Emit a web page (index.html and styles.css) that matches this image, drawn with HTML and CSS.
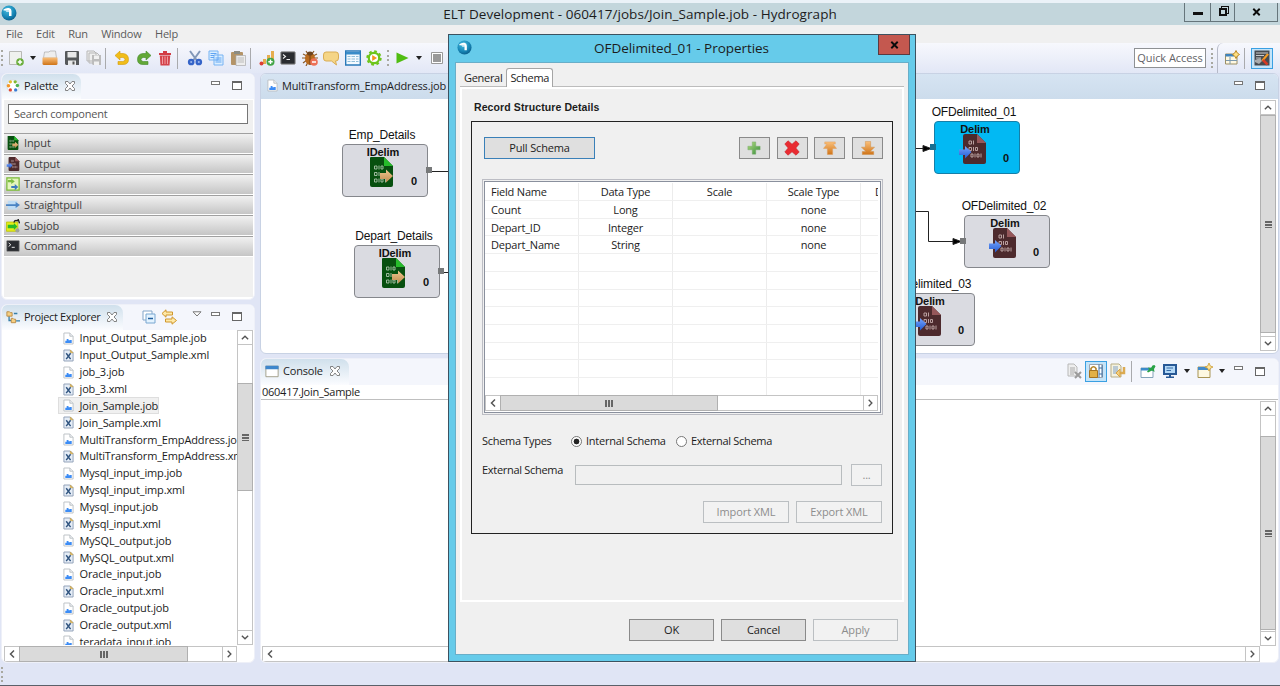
FILE: index.html
```html
<!DOCTYPE html>
<html lang="en">
<head>
<meta charset="utf-8">
<title>ELT Development - Hydrograph</title>
<link rel="stylesheet" href="styles.css">
</head>
<body>
<svg class="sprite" aria-hidden="true">
  <defs>
    <radialGradient id="ball" cx=".4" cy=".3" r=".8"><stop offset="0" stop-color="#46bde0"/><stop offset=".6" stop-color="#1685b5"/><stop offset="1" stop-color="#07537f"/></radialGradient>
    <linearGradient id="orange" x1="0" y1="0" x2="0" y2="1"><stop offset="0" stop-color="#fbc07a"/><stop offset="1" stop-color="#cf7418"/></linearGradient>
    <linearGradient id="green" x1="0" y1="0" x2="1" y2="1"><stop offset="0" stop-color="#b4dc80"/><stop offset="1" stop-color="#358d3c"/></linearGradient>
    <linearGradient id="blue" x1="0" y1="0" x2="0" y2="1"><stop offset="0" stop-color="#75a5ff"/><stop offset="1" stop-color="#245bd0"/></linearGradient>
    <linearGradient id="tan" x1="0" y1="0" x2="0" y2="1"><stop offset="0" stop-color="#f0c890"/><stop offset="1" stop-color="#c08a4c"/></linearGradient>
  </defs>
  <symbol id="logo" viewBox="0 0 16 16"><circle cx="8" cy="8" r="7.500" fill="url(#ball)"/><path d="M2.500 4.500Q5 2.500 8 3Q10.500 3.500 10.500 6V11H8V7H5.500V5.500H2.500z" fill="#fff"/><path d="M4 5H8V7H6z" fill="#bfe6f4"/></symbol>
  <symbol id="new" viewBox="0 0 16 16"><path d="M1.500 1.500H13.500V14.500H1.500z" fill="#eff1ee" stroke="#b8b9b5"/><circle cx="12" cy="12" r="3.800" fill="#68ad38"/><path d="M12 9.800V14.200M9.800 12H14.200" stroke="#fff" stroke-width="1.500"/></symbol>
  <symbol id="open" viewBox="0 0 16 16"><path d="M1.500 8L2.500 2H7L8 1H13.500L14.500 8z" fill="#eee" stroke="#aaa" stroke-width=".7"/><path d="M.5 7.500H15.500V13.500Q15.500 15 14 15H2Q.5 15 .5 13.500z" fill="url(#orange)"/></symbol>
  <symbol id="save" viewBox="0 0 16 16"><path d="M1 2Q1 1 2 1H14Q15 1 15 2V15H2L1 14z" fill="#55585b"/><path d="M3.500 2H12.500V7.500H3.500zM4 10.500H12V15H4z" fill="#e8e9ea"/><path d="M8.500 11.500H10.500V14.500H8.500z" fill="#555"/></symbol>
  <symbol id="saveall" viewBox="0 0 16 16"><path d="M1 1H8L10 3V11H1zM3 3H11L13 5V13H3z" fill="#eee" stroke="#b7b7b7"/><path d="M6 5H15V15H7L6 14z" fill="#bcbcbc"/><path d="M8 5.500H13V9H8zM8 11.500H13V15H8z" fill="#f1f1f1"/></symbol>
  <symbol id="undo" viewBox="0 0 16 16"><path d="M1 5.500L6 1V3.500H9Q14.500 4 14.500 9.500Q14.500 14.500 9 14.500H4V11.500H8.500Q11 11.500 11 9.500Q11 7.500 8.500 7.500H6V10z" fill="#f1bd19" stroke="#d29a0c" stroke-width=".6"/></symbol>
  <symbol id="redo" viewBox="0 0 16 16"><path d="M15 5.500L10 1V3.500H7Q1.500 4 1.500 9.500Q1.500 14.500 7 14.500H12V11.500H7.500Q5 11.500 5 9.500Q5 7.500 7.500 7.500H10V10z" fill="#62a837" stroke="#438a29" stroke-width=".6"/></symbol>
  <symbol id="trash" viewBox="0 0 16 16"><path d="M2 3H6V1H10V3H14V5H2z" fill="#d23b44"/><path d="M2.800 5.500H13.200L12.500 15.500H3.500z" fill="#d4434b"/><path d="M5.500 6.500V14M8 6.500V14M10.500 6.500V14" stroke="#f09ba0"/></symbol>
  <symbol id="cut" viewBox="0 0 16 16"><path d="M3 1L9.500 10M13 1L6.500 10" stroke="#8297b8" stroke-width="2"/><g fill="#9db8ee" stroke="#3564c8" stroke-width="2.300"><circle cx="4.200" cy="12" r="2.200"/><circle cx="11.800" cy="12" r="2.200"/></g></symbol>
  <symbol id="copy" viewBox="0 0 16 16"><path d="M1 1H10V10H1zM6 5H15V15H6z" fill="#dbeeff" stroke="#76b3f3"/><path d="M2.500 3.500H8.500M2.500 5.500H6M2.500 7.500H6M7.500 8H13.500M7.500 10H13.500M7.500 12H13.500" stroke="#60a5f3"/></symbol>
  <symbol id="paste" viewBox="0 0 16 16"><rect x="1" y="2" width="12" height="13" rx="1" fill="#b49468"/><path d="M4 1H10V4H4z" fill="#8c8c83"/><path d="M6 5.500H15.500V15.500H6z" fill="#ededed" stroke="#aaa" stroke-width=".7"/><path d="M7.500 8H14M7.500 10H14M7.500 12H14" stroke="#bbb"/></symbol>
  <symbol id="chart" viewBox="0 0 16 16"><path d="M4 9H7V14H4zM8 5H11V14H8zM12 1H15V14H12z" fill="#e6ad4f"/><circle cx="2.500" cy="13.500" r="2" fill="#dc3e37"/><circle cx="11.500" cy="11.700" r="4" fill="#43a548"/><path d="M11.500 9.500V14M9.300 11.700H13.700" stroke="#fff" stroke-width="1.400"/></symbol>
  <symbol id="terminal" viewBox="0 0 16 16"><rect x=".8" y="1.800" width="14.400" height="12.400" rx=".8" fill="#2a2c30" stroke="#9b9b9b"/><path d="M3 4.500L5.500 6.500L3 8.500M6.500 9.500H10" fill="none" stroke="#eee" stroke-width="1.100"/></symbol>
  <symbol id="bug" viewBox="0 0 16 16"><path d="M4 1L6 4M12 1L10 4M1 4L5 6M15 4L11 6M0 8H16M1 13L5 10M4 16L6 12" stroke="#8b5a29" stroke-width="1.200"/><ellipse cx="8" cy="8.500" rx="5" ry="6.300" fill="#b96a1e"/><ellipse cx="8" cy="3.500" rx="3" ry="2" fill="#6c431e"/><path d="M8 5V15" stroke="#754015"/><circle cx="12" cy="12" r="3.800" fill="#ed7057"/><path d="M10 12H14" stroke="#fff" stroke-width="1.500"/></symbol>
  <symbol id="bubble" viewBox="0 0 16 16"><path d="M3 2H13Q15.500 2 15.500 5V8Q15.500 11 13 11H12.500L13.500 15L8.500 11H3Q.5 11 .5 8V5Q.5 2 3 2z" fill="#f5d587" stroke="#d9ad56"/></symbol>
  <symbol id="grid" viewBox="0 0 16 16"><path d="M.7 1H15.300V15H.7z" fill="#f4faff" stroke="#2979b9" stroke-width="1.400"/><path d="M1 2H15V4.500H1z" fill="#398cc9"/><path d="M2.500 6.500H13.500M2.500 9H13.500M2.500 11.500H13.500" stroke="#91bed9"/><path d="M6 5V14M10.500 5V14" stroke="#f4faff"/></symbol>
  <symbol id="gear" viewBox="0 0 16 16"><circle cx="8" cy="8" r="5.200" fill="#fff" stroke="#6ec51b" stroke-width="2.200"/><circle cx="8" cy="8" r="6.700" fill="none" stroke="#6ec51b" stroke-width="2" stroke-dasharray="2.700 2.560"/><path d="M6.200 5L11 8L6.200 11z" fill="#f3951c"/></symbol>
  <symbol id="play" viewBox="0 0 16 16"><path d="M2.500 2.500L14.500 8L2.500 13.500z" fill="#50bd12"/></symbol>
  <symbol id="stop" viewBox="0 0 16 16"><path d="M2.500 2.500H13.500V13.500H2.500z" fill="#fff" stroke="#999"/><path d="M4 4H12V12H4z" fill="#999"/></symbol>
  <symbol id="palette" viewBox="0 0 16 16"><circle cx="8" cy="8" r="7" fill="#fff" stroke="#d6dbe3"/><circle cx="5" cy="3.200" r="1.900" fill="#e5bd2d"/><circle cx="10.500" cy="3.200" r="1.900" fill="#83b934"/><circle cx="13" cy="7.500" r="2" fill="#4fb254"/><circle cx="2.800" cy="7.800" r="2" fill="#f39728"/><circle cx="5" cy="12.500" r="1.900" fill="#e24932"/><circle cx="11" cy="12.500" r="1.900" fill="#387bd5"/></symbol>
  <symbol id="close" viewBox="0 0 12 12"><path d="M1.500 1.500H4L6 4L8 1.500H10.500V3.500L8 6L10.500 8.500V10.500H8L6 8L4 10.500H1.500V8.500L4 6L1.500 3.500z" fill="#fdfdfd" stroke="#777" stroke-width=".9"/></symbol>
  <symbol id="tree" viewBox="0 0 16 16"><path d="M3.500 6V12H6M9 4H13M11.500 12.500H16" fill="none" stroke="#367ea8" stroke-width="1.500"/><path d="M1 2H4L5 3H7V7H1zM6 9.500H8L9 10.500H11V14.500H6z" fill="#f5cf83" stroke="#b88841"/></symbol>
  <symbol id="collapse" viewBox="0 0 16 16"><path d="M2 2H11V11H2z" fill="#fff" stroke="#83a6c9"/><path d="M5 5H14V14H5z" fill="#e3f3ff" stroke="#79a6d0"/><path d="M7 9.500H12" stroke="#225f9e" stroke-width="1.500"/></symbol>
  <symbol id="link" viewBox="0 0 16 16"><path d="M5 .8V3H11.500V6H5V8.200L1 4.500zM11 7.800V10H4.500V13H11V15.200L15.500 11.500z" fill="#ffe9a6" stroke="#cf962d"/></symbol>
  <symbol id="job" viewBox="0 0 12 14"><path d="M1 1H7.500L11 4.500V13H1z" fill="#fff" stroke="#b9bec3"/><path d="M7.500 1V4.500H11" fill="#eef1f4" stroke="#b9bec3"/><path d="M2.500 12V9.500H4V7.500H6V9H7.500V8.500H9.500V12z" fill="#3c8cf5"/></symbol>
  <symbol id="xml" viewBox="0 0 12 14"><path d="M1 1H8L11 4V13H1z" fill="#e5edf7" stroke="#8c9db3"/><path d="M8 1L11 4H8z" fill="#e6be59" stroke="#c6a14e" stroke-width=".7"/><path d="M3.500 4.500L8.300 11M8.300 4.500L3.500 11" stroke="#315580" stroke-width="1.600"/></symbol>
  <symbol id="inputfile" viewBox="0 0 23 30"><path d="M1 0H14L23 9V28Q23 30 21 30H2Q0 30 0 28V1Q0 0 1 0z" fill="#07500f"/><path d="M14 0L23 9H14z" fill="#26bb2b"/><g fill="none" stroke="#aec5ad" stroke-width=".9"><path d="M4.500 9H7V12H4.500zM9 8.500V12.500M11 9H13V12H11zM4.500 15.500H7V18.500H4.500zM9 15V19M4.500 22H7V25H4.500zM9 21.500V25.500M11 22H13V25H11zM15.500 21.500V25.500"/></g><path d="M10 16H16V12.500L23 19L16 25.500V22H10z" fill="url(#tan)"/></symbol>
  <symbol id="outputfile" viewBox="0 0 27 30"><path d="M6 0H18L27 9V28Q27 30 25 30H6Q4 30 4 28V2Q4 0 6 0z" fill="#4d2a2d"/><path d="M18 0L27 9H18z" fill="#96575a"/><g fill="none" stroke="#c5adad" stroke-width=".9"><path d="M10 7H12.500V10H10zM14.500 6.500V10.500M10 13.500H12.500V16.500H10zM14.500 13V17M16.500 13.500H18.500V16.500H16.500zM12 20H14V23H12zM16 19.500V23.500M18 20H20V23H18zM22 19.500V23.500"/></g><path d="M0 15.500H6V12L12.500 18L6 24.500V21H0z" fill="url(#blue)"/></symbol>
  <symbol id="transform" viewBox="0 0 16 16"><path d="M1 1H15V15H1z" fill="#e3f5bd" stroke="#79b934" stroke-width="1.400"/><path d="M2 3.500H6V1.800L10 5L6 8V6H2z" fill="#7cbd42"/><path d="M6 10.200H10V8L14 11.500L10 15V12.500H6z" fill="#3c79bf"/></symbol>
  <symbol id="straight" viewBox="0 0 16 16"><path d="M2 3H13V13H2z" fill="#bfdcf4"/><path d="M0 7H11V4.500L16 8L11 11.500V9H0z" fill="#4a83c3"/></symbol>
  <symbol id="subjob" viewBox="0 0 16 16"><path d="M.5 3.500H13.500V14H.5z" fill="#e4ec18" stroke="#bdc60b"/><path d="M2 6.500H9V4.500L13 8.500L9 12.500V10.500H2z" fill="#28bb2a"/><path d="M9 4Q10 1 13 2L14 .5L15.500 5" fill="none" stroke="#222" stroke-width="1.500"/><circle cx="13" cy="13" r="2.400" fill="#9fa39b"/></symbol>
  <symbol id="console" viewBox="0 0 16 16"><path d="M1 2.500H15V14.500H1z" fill="#fff" stroke="#9c9880"/><path d="M.5 2H15.500V6H.5z" fill="#3e87cc"/></symbol>
  <symbol id="clear" viewBox="0 0 16 16"><path d="M2 1H8L11 4V13H2z" fill="#eee" stroke="#b8b8b8"/><path d="M4 5H9M4 7H9M4 9H9M4 11H8" stroke="#aaa"/><path d="M9 9L15 15M15 9L9 15" stroke="#9b9b9b" stroke-width="2"/></symbol>
  <symbol id="lock" viewBox="0 0 16 16"><path d="M1.500 1.500H14.500V14.500H1.500z" fill="#fff" stroke="#9ba5b2"/><path d="M11 1.500V14.500M11 5H14M11 11H14M14 2V14" stroke="#3c6fa2"/><path d="M3 8V5.500Q5.500 2 8 5.500V8" fill="none" stroke="#b4852b" stroke-width="1.600"/><path d="M1.500 7.500H9.500V14.500H1.500z" fill="#e2b046" stroke="#a57321"/></symbol>
  <symbol id="wrap" viewBox="0 0 16 16"><path d="M1 1H9L11 3V14H1z" fill="#f5f2df" stroke="#b7ad85"/><path d="M3 4H8M3 6H8M3 8H8M3 10H6" stroke="#7e9fc6"/><path d="M14 4V10H9" fill="none" stroke="#dbaa51" stroke-width="2.500"/><path d="M10 6V14L6 10z" fill="#f5cf7c" stroke="#d5a247"/></symbol>
  <symbol id="pin" viewBox="0 0 16 16"><path d="M1 5H13V14.500H1z" fill="#fff" stroke="#83a3b9"/><path d="M1 5H13V7.500H1z" fill="#3b8bca"/><path d="M7 8.500L9 6.500L8 4.500L11 5L12.500 2.500Q15 1 15.500 3.500L14 6L14.500 9L12 7.500L8 9.500z" fill="#29a347"/></symbol>
  <symbol id="monitor" viewBox="0 0 16 16"><path d="M2 2H14V11H2z" fill="#b4d9f7" stroke="#285996" stroke-width="2"/><path d="M4.500 5H11M4.500 7.500H9" stroke="#386da7"/><path d="M7 12H9V13.500H12V15H4V13.500H7z" fill="#285996"/></symbol>
  <symbol id="newwin" viewBox="0 0 16 16"><path d="M1 4H13V14.500H1z" fill="#fdf8e1" stroke="#a89454"/><path d="M1 4H11V7H1z" fill="#438aca"/><path d="M12 0L13.300 3L16 4L13.300 5.300L12 8L10.700 5.300L8 4L10.700 3z" fill="#ffe59a" stroke="#c99b32" stroke-width=".8"/></symbol>
  <symbol id="perspective" viewBox="0 0 16 16"><path d="M1.500 4H13V14H1.500z" fill="#fff8e1" stroke="#9a8e65"/><path d="M1.500 4H10V6.500H1.500z" fill="#3d83bf"/><path d="M6 7V14M2 10.500H13" stroke="#7b98ad"/><path d="M12 .5L13.300 3L15.500 4.500L13.300 6L12 8.500L10.700 6L8.500 4.500L10.700 3z" fill="#ffe083" stroke="#bc8b28"/></symbol>
  <symbol id="elt" viewBox="0 0 16 16"><path d="M.5 .5H15.500V15.500H.5z" fill="#474b50"/><path d="M2 3H14M2 5.500H10M2 8H7" stroke="#c9c9c9"/><path d="M1 10L6 8L8 11L5 14L1 12z" fill="#a9abad"/><path d="M7.500 10L9 11.500L15 4.500L13 3.500z" fill="#f49a21"/><path d="M9 10L13.500 14.500" stroke="#d63a24" stroke-width="2.500"/></symbol>
  <symbol id="plus" viewBox="0 0 16 16"><path d="M6 1H10V6H15V10H10V15H6V10H1V6H6z" fill="url(#green)" stroke="#75a96a" stroke-width=".5"/></symbol>
  <symbol id="cross" viewBox="0 0 16 16"><path d="M4 .8L8 4.200L12 .8L15.200 4L11.800 8L15.200 12L12 15.200L8 11.800L4 15.200L.8 12L4.200 8L.8 4z" fill="#e92b31" stroke="#c71f26" stroke-width=".6"/></symbol>
  <symbol id="top" viewBox="0 0 16 16"><path d="M2 1H14V3.500H11.500L15.500 8.500H11V15.500H5V8.500H.5L4.500 3.500H2z" fill="url(#orange)" stroke="#dc9b58" stroke-width=".5"/></symbol>
  <symbol id="bottom" viewBox="0 0 16 16"><path d="M5 .5H11V7H15.500L10.500 12H14.500V15.500H1.500V12H5.500L.5 7H5z" fill="url(#orange)" stroke="#cc8a40" stroke-width=".5"/></symbol>
  <symbol id="up" viewBox="0 0 10 10"><path d="M1.500 7L5 3.500L8.500 7" fill="none" stroke="#555" stroke-width="1.500"/></symbol>
  <symbol id="down" viewBox="0 0 10 10"><path d="M1.500 3L5 6.500L8.500 3" fill="none" stroke="#555" stroke-width="1.500"/></symbol>
  <symbol id="left" viewBox="0 0 10 10"><path d="M7 1.500L3.500 5L7 8.500" fill="none" stroke="#555" stroke-width="1.500"/></symbol>
  <symbol id="right" viewBox="0 0 10 10"><path d="M3 1.500L6.500 5L3 8.500" fill="none" stroke="#555" stroke-width="1.500"/></symbol>
</svg>

<header class="titlebar">
  <svg class="ico"><use href="#logo"/></svg>
  <h1 class="window-title">ELT Development - 060417/jobs/Join_Sample.job - Hydrograph</h1>
  <div class="window-buttons"><span class="wb"><i class="wb-min"></i></span><span class="wb wb-mid"><i class="wb-restore"></i></span><span class="wb wb-wide"><svg class="wb-x" viewBox="0 0 10 10"><path d="M1 1L9 9M9 1L1 9"/></svg></span></div>
</header>
<nav class="menubar"><span>File</span><span>Edit</span><span>Run</span><span>Window</span><span>Help</span></nav>
<div class="toolbar">
  <i class="dots"></i>
  <div class="tools g1"><svg class="ico"><use href="#new"/></svg><i class="caret"></i><svg class="ico"><use href="#open"/></svg><svg class="ico"><use href="#save"/></svg><svg class="ico"><use href="#saveall"/></svg></div>
  <i class="sep"></i>
  <div class="tools g2"><svg class="ico"><use href="#undo"/></svg><svg class="ico"><use href="#redo"/></svg><svg class="ico"><use href="#trash"/></svg></div>
  <i class="sep"></i>
  <div class="tools g2"><svg class="ico"><use href="#cut"/></svg><svg class="ico"><use href="#copy"/></svg><svg class="ico"><use href="#paste"/></svg></div>
  <i class="sep"></i>
  <div class="tools g2"><svg class="ico"><use href="#chart"/></svg><svg class="ico"><use href="#terminal"/></svg><svg class="ico"><use href="#bug"/></svg><svg class="ico"><use href="#bubble"/></svg><svg class="ico"><use href="#grid"/></svg><svg class="ico"><use href="#gear"/></svg></div>
  <i class="dots"></i>
  <div class="tools g3"><svg class="ico"><use href="#play"/></svg><i class="caret"></i><svg class="ico"><use href="#stop"/></svg></div>
  <div class="quick">Quick Access</div>
  <i class="dots quick-dots"></i>
  <div class="perspectives"><svg class="ico"><use href="#perspective"/></svg><i class="sep"></i><span class="active-tool"><svg class="ico"><use href="#elt"/></svg></span></div>
</div>

<main class="workbench">
  <div class="side">
    <section class="view palette">
      <div class="tabs"><div class="tab"><svg class="ico s14"><use href="#palette"/></svg><span>Palette</span><svg class="x"><use href="#close"/></svg></div><div class="view-tools"><i class="min"></i><i class="max"></i></div></div>
      <div class="palette-body">
        <div class="search">Search component</div>
        <div class="drawers">
          <div class="drawer"><svg class="ico s14"><use href="#inputfile"/></svg>Input</div>
          <div class="drawer"><svg class="ico s14"><use href="#outputfile"/></svg>Output</div>
          <div class="drawer"><svg class="ico s14"><use href="#transform"/></svg>Transform</div>
          <div class="drawer"><svg class="ico s14"><use href="#straight"/></svg>Straightpull</div>
          <div class="drawer"><svg class="ico s14"><use href="#subjob"/></svg>Subjob</div>
          <div class="drawer"><svg class="ico s14"><use href="#terminal"/></svg>Command</div>
        </div>
      </div>
    </section>
    <section class="view explorer">
      <div class="tabs"><div class="tab"><svg class="ico s14"><use href="#tree"/></svg><span>Project Explorer</span><svg class="x"><use href="#close"/></svg></div><div class="view-tools"><svg class="ico collapse"><use href="#collapse"/></svg><svg class="ico link"><use href="#link"/></svg><svg class="menu-tri" viewBox="0 0 10 6"><path d="M1 .8H9L5 5z"/></svg><i class="min"></i><i class="max"></i></div></div>
      <div class="explorer-body">
        <div class="tree-row">
          <div class="files">
            <div class="file"><svg class="fi"><use href="#job"/></svg><span>Input_Output_Sample.job</span></div>
            <div class="file"><svg class="fi"><use href="#xml"/></svg><span>Input_Output_Sample.xml</span></div>
            <div class="file"><svg class="fi"><use href="#job"/></svg><span>job_3.job</span></div>
            <div class="file"><svg class="fi"><use href="#xml"/></svg><span>job_3.xml</span></div>
            <div class="file selected"><svg class="fi"><use href="#job"/></svg><span>Join_Sample.job</span></div>
            <div class="file"><svg class="fi"><use href="#xml"/></svg><span>Join_Sample.xml</span></div>
            <div class="file"><svg class="fi"><use href="#job"/></svg><span>MultiTransform_EmpAddress.job</span></div>
            <div class="file"><svg class="fi"><use href="#xml"/></svg><span>MultiTransform_EmpAddress.xml</span></div>
            <div class="file"><svg class="fi"><use href="#job"/></svg><span>Mysql_input_imp.job</span></div>
            <div class="file"><svg class="fi"><use href="#xml"/></svg><span>Mysql_input_imp.xml</span></div>
            <div class="file"><svg class="fi"><use href="#job"/></svg><span>Mysql_input.job</span></div>
            <div class="file"><svg class="fi"><use href="#xml"/></svg><span>Mysql_input.xml</span></div>
            <div class="file"><svg class="fi"><use href="#job"/></svg><span>MySQL_output.job</span></div>
            <div class="file"><svg class="fi"><use href="#xml"/></svg><span>MySQL_output.xml</span></div>
            <div class="file"><svg class="fi"><use href="#job"/></svg><span>Oracle_input.job</span></div>
            <div class="file"><svg class="fi"><use href="#xml"/></svg><span>Oracle_input.xml</span></div>
            <div class="file"><svg class="fi"><use href="#job"/></svg><span>Oracle_output.job</span></div>
            <div class="file"><svg class="fi"><use href="#xml"/></svg><span>Oracle_output.xml</span></div>
            <div class="file"><svg class="fi"><use href="#job"/></svg><span>teradata_input.job</span></div>
          </div>
          <div class="vbar"><svg class="arrow"><use href="#up"/></svg><div class="vthumb ex-v"><i class="vgrip"></i></div><svg class="arrow last"><use href="#down"/></svg></div>
        </div>
        <div class="hbar"><svg class="arrow"><use href="#left"/></svg><div class="hthumb ex-h"><i class="hgrip"></i></div><svg class="arrow last"><use href="#right"/></svg></div>
      </div>
    </section>
  </div>

  <div class="center">
    <section class="view editor">
      <div class="tabs"><div class="editor-tab"><svg class="fi"><use href="#job"/></svg><span>MultiTransform_EmpAddress.job</span></div><div class="view-tools"><i class="min"></i><i class="max"></i></div></div>
      <div class="editor-body">
        <div class="canvas">
          <svg class="wires" viewBox="0 0 1000 255"><path d="M171 72.500H200M183 173.500H200M650 49.500H670M650 112.500H667.500V142.500H700" /><path class="head" d="M662 46.500L670 49.500L662 52.500zM692 139.500L700 142.500L692 145.500z"/></svg>
          <div class="node emp"><b class="label">Emp_Details</b><span class="kind">IDelim</span><svg class="in"><use href="#inputfile"/></svg><span class="num">0</span><i class="port r"></i></div>
          <div class="node dep"><b class="label">Depart_Details</b><span class="kind">IDelim</span><svg class="in"><use href="#inputfile"/></svg><span class="num">0</span><i class="port r"></i></div>
          <div class="node of1"><b class="label">OFDelimited_01</b><span class="kind">Delim</span><svg class="out"><use href="#outputfile"/></svg><span class="num">0</span><i class="port l"></i></div>
          <div class="node of2"><b class="label">OFDelimited_02</b><span class="kind">Delim</span><svg class="out"><use href="#outputfile"/></svg><span class="num">0</span><i class="port l"></i></div>
          <div class="node of3"><b class="label">OFDelimited_03</b><span class="kind">Delim</span><svg class="out"><use href="#outputfile"/></svg><span class="num">0</span></div>
        </div>
        <div class="vbar"><svg class="arrow"><use href="#up"/></svg><div class="vthumb ed-v"><i class="vgrip"></i></div><svg class="arrow last"><use href="#down"/></svg></div>
      </div>
    </section>
    <section class="view console">
      <div class="tabs"><div class="tab"><svg class="ico s14"><use href="#console"/></svg><span>Console</span><svg class="x"><use href="#close"/></svg></div>
        <div class="view-tools"><svg class="ico"><use href="#clear"/></svg><span class="active-tool"><svg class="ico"><use href="#lock"/></svg></span><svg class="ico wrapico"><use href="#wrap"/></svg><i class="sep"></i><svg class="ico pinico"><use href="#pin"/></svg><svg class="ico monico"><use href="#monitor"/></svg><i class="caret"></i><svg class="ico winico"><use href="#newwin"/></svg><i class="caret"></i><i class="min"></i><i class="max"></i></div></div>
      <div class="console-name">060417.Join_Sample</div>
      <div class="console-body"><div class="console-text"></div><div class="vbar"><svg class="arrow"><use href="#up"/></svg><div class="vthumb co-v"><i class="vgrip"></i></div><svg class="arrow last"><use href="#down"/></svg></div></div>
      <div class="hbar"><svg class="arrow"><use href="#left"/></svg><svg class="arrow last"><use href="#right"/></svg></div>
    </section>
  </div>
</main>
<footer class="status"><i class="dots"></i></footer>

<div class="dialog">
  <div class="dlg-title"><svg class="ico"><use href="#logo"/></svg><h2 class="dlg-name">OFDelimited_01 - Properties</h2><span class="dlg-close"><svg class="wb-x" viewBox="0 0 10 10"><path d="M1 1L9 9M9 1L1 9"/></svg></span></div>
  <div class="dlg-body">
    <div class="dlg-tabs"><span class="dtab">General</span><span class="dtab on">Schema</span></div>
    <div class="pane">
      <h3 class="group-name">Record Structure Details</h3>
      <div class="group">
        <div class="actions"><span class="btn pull">Pull Schema</span><span class="btn sq"><svg class="bi"><use href="#plus"/></svg></span><span class="btn sq"><svg class="bi big"><use href="#cross"/></svg></span><span class="btn sq"><svg class="bi"><use href="#top"/></svg></span><span class="btn sq"><svg class="bi"><use href="#bottom"/></svg></span></div>
        <div class="table-frame"><div class="table-box">
          <div class="grid">
            <div class="gr gh"><span>Field Name</span><span>Data Type</span><span>Scale</span><span>Scale Type</span><span class="cut">D</span></div>
            <div class="gr"><span>Count</span><span>Long</span><span></span><span>none</span><span></span></div>
            <div class="gr"><span>Depart_ID</span><span>Integer</span><span></span><span>none</span><span></span></div>
            <div class="gr"><span>Depart_Name</span><span>String</span><span></span><span>none</span><span></span></div>
            <div class="gr"><span></span><span></span><span></span><span></span><span></span></div>
            <div class="gr"><span></span><span></span><span></span><span></span><span></span></div>
            <div class="gr"><span></span><span></span><span></span><span></span><span></span></div>
            <div class="gr"><span></span><span></span><span></span><span></span><span></span></div>
            <div class="gr"><span></span><span></span><span></span><span></span><span></span></div>
            <div class="gr"><span></span><span></span><span></span><span></span><span></span></div>
            <div class="gr"><span></span><span></span><span></span><span></span><span></span></div>
            <div class="gr"><span></span><span></span><span></span><span></span><span></span></div>
          </div>
          <div class="hbar"><svg class="arrow"><use href="#left"/></svg><div class="hthumb dl-h"><i class="hgrip"></i></div><svg class="arrow last"><use href="#right"/></svg></div>
        </div></div>
        <div class="types"><span class="lbl">Schema Types</span><i class="radio on"></i><span class="rl">Internal Schema</span><i class="radio"></i><span>External Schema</span></div>
        <div class="ext"><span class="lbl ext-lbl">External Schema</span><span class="field"></span><span class="btn off dotsbtn">...</span></div>
        <div class="xmls"><span class="btn off xbtn">Import XML</span><span class="btn off xbtn">Export XML</span></div>
      </div>
    </div>
    <div class="dlg-foot"><span class="btn ok">OK</span><span class="btn ok">Cancel</span><span class="btn ok off">Apply</span></div>
  </div>
</div>
</body>
</html>
```
FILE: styles.css
```css
* { box-sizing: border-box; }
body {
  margin: 0; width: 1280px; height: 686px; overflow: hidden; position: relative;
  display: flex; flex-direction: column;
  background: #e0e5f5; color: #1c1c1c;
  font: 11px/16px "Open Sans", "Noto Sans", sans-serif; letter-spacing: -.2px;
}
h1, h2, h3 { margin: 0; font-weight: 400; }
i { display: block; flex: none; }
svg { flex: none; display: block; }
.sprite { position: absolute; width: 0; height: 0; }
.ico { width: 16px; height: 16px; }
.s14 { width: 14px; height: 14px; }

.titlebar { height: 25px; border-top: 3px solid #ebf2f8; background: #c3d6dc; display: flex; flex: none; padding-left: 1px; }
.titlebar .ico { margin-top: 2px; }
.window-title { flex: 1; text-align: center; font-size: 13.500px; line-height: 22px; padding-left: 79px; letter-spacing: .06px; }
.window-buttons { display: flex; height: 19px; margin-right: 2px; border: 1px solid #66757b; border-top: 0; }
.wb { width: 26px; display: flex; justify-content: center; align-items: center; border-right: 1px solid #66757b; }
.wb-mid { width: 24px; }
.wb-wide { width: 42px; border: 0; }
.wb-min { width: 10px; height: 3px; background: #111; margin-top: 3px; }
.wb-restore { width: 8px; height: 8px; border: 2px solid #111; box-shadow: 2px -2px 0 -1px #c3d6dc, 2px -2px 0 0 #111; }
.wb-x { width: 9px; height: 8px; fill: none; stroke: #0b0b0b; stroke-width: 2.4; }

.menubar { height: 18px; flex: none; background: #f0f0f0; display: flex; gap: 13.400px; padding-left: 6px; line-height: 18px; color: #5b5b5b; }
.toolbar { height: 30px; flex: none; display: flex; align-items: center; padding-left: 1px; background: linear-gradient(#f7f8fd, #e2e7f6); }
.tools { display: flex; align-items: center; gap: 5.5px; }
.dots { width: 2px; height: 17px; background: repeating-linear-gradient(#a8a8a0 0 2px, transparent 2px 4.5px); }
.sep { width: 1px; height: 21px; background: #a9aaad; }
.caret { border: 3.5px solid transparent; border-top: 4px solid #222; border-bottom: 0; }
.g1 { padding: 0 3px 0 5px; gap: 6px; }
.g2 { padding: 0 4.200px 0 8.200px; }
.g3 { padding-left: 5px; gap: 6.500px; }
.quick { margin-left: auto; width: 72px; height: 20px; border: 1px solid #8e9194; background: #fff; line-height: 18px; text-align: center; color: #5f6266; white-space: nowrap; letter-spacing: -.05px; }
.quick-dots { height: 21px; margin: 0 4px 0 5px; }
.perspectives { display: flex; align-items: center; height: 30px; gap: 4px; padding: 0 7px 0 6px; border-left: 1px solid #b6bac8; border-top-left-radius: 6px; }
.active-tool { width: 22px; height: 21px; border: 1px solid #3aa0e2; background: #c4e4f9; display: flex; align-items: center; justify-content: center; }
.perspectives .active-tool { margin-left: 2px; }

.workbench { height: 590px; flex: none; display: flex; gap: 5px; padding: 0 1px; }
.side { width: 254px; display: flex; flex-direction: column; gap: 4px; }
.center { flex: 1; min-width: 0; display: flex; flex-direction: column; gap: 4px; }
.view { background: #fff; border-radius: 6px; overflow: hidden; display: flex; flex-direction: column; border: 1px solid #eef0f8; }
.tabs { height: 25px; flex: none; display: flex; background: #f4f6fc; }
.tab { display: flex; align-items: center; padding: 0 5px 2px 4px; border-radius: 5px 8px 0 0; background: linear-gradient(#d0e0ec, #fbfcff); white-space: nowrap; }
.tab span { margin-left: 4px; }
.explorer .tab span { letter-spacing: -.34px; }
.x { width: 12px; height: 12px; margin-left: 6px; }
.view-tools { margin-left: auto; display: flex; align-items: center; padding-bottom: 2px; }
.min { width: 9px; height: 4px; border: 1px solid #777; background: #fff; margin: -6px 12px 0 0; }
.max { width: 10px; height: 9px; border: 1px solid #666; border-top-width: 2px; background: #fff; margin-right: 12px; }
.center .max { margin-right: 13px; }

.palette { height: 227px; }
.palette-body { flex: 1; margin: 1px 1px 2px 2px; background: #f0f0f0; padding: 4px 0 0; }
.search { width: 240px; height: 20px; margin-left: 4px; border: 1px solid #767676; background: #fff; line-height: 18px; padding-left: 5px; color: #555; letter-spacing: -.2px; }
.drawers { margin-top: 9px; }
.drawer { height: 20.600px; display: flex; align-items: center; gap: 4px; padding-left: 2px; border-top: 1px solid #a0a0a0; border-bottom: 1px solid #fff; background: linear-gradient(#f1f1f1, #c5c5c5); color: #3e3e3e; letter-spacing: -.1px; }

.explorer { height: 359px; }
.explorer .collapse { margin-right: 4px; }
.explorer .link { margin-right: 15px; }
.menu-tri { width: 10px; height: 6px; fill: #fff; stroke: #777; margin: -6px 9px 0 0; }
.explorer-body { flex: 1; min-height: 0; margin-left: 2px; display: flex; flex-direction: column; }
.tree-row { height: 315px; display: flex; overflow: hidden; }
.files { width: 233px; overflow: hidden; flex: none; letter-spacing: -.15px; }
.file { height: 16.870px; width: max-content; margin-left: 54px; padding: 0 1px 0 5px; display: flex; align-items: center; white-space: nowrap; }
.file span { margin-left: 5.500px; }
.fi { width: 11px; height: 13px; }
.selected { background: #f0f0f0; box-shadow: inset 0 0 0 1px #dedede; }

.vbar { width: 16px; flex: none; background: #fff; border: 1px solid #c4c4c4; display: flex; flex-direction: column; align-items: center; }
.hbar { height: 16px; flex: none; background: #fff; border: 1px solid #c4c4c4; display: flex; align-items: center; }
.arrow { width: 14px; height: 14px; padding: 2px; flex: none; }
.vbar .arrow { border-bottom: 1px solid #c4c4c4; }
.vbar .last { margin-top: auto; border-bottom: 0; border-top: 1px solid #c4c4c4; }
.hbar .last { margin-left: auto; border-left: 1px solid #c4c4c4; }
.vthumb, .hthumb { background: #dadada; border: 1px solid #b0b0b0; display: flex; align-items: center; justify-content: center; flex: none; }
.vthumb { width: 16px; }
.hthumb { height: 16px; }
.vgrip { width: 7px; height: 7px; background: repeating-linear-gradient(#666 0 2px, transparent 2px 3px); }
.hgrip { width: 8px; height: 7px; background: repeating-linear-gradient(90deg, #666 0 2px, transparent 2px 3px); }
.ex-v { height: 108px; margin-top: 38px; }
.ex-h { width: 169px; }
.explorer .hbar { width: 233px; margin-top: 1px; }

.editor { height: 281px; border-color: #c8d2e4; }
.editor .tabs { background: linear-gradient(#d6e4f2, #ccdcec); }
.editor-tab { display: flex; align-items: center; padding: 0 0 2px 6px; white-space: nowrap; letter-spacing: -.14px; }
.editor-tab span { margin-left: 4px; }
.editor-body { flex: 1; display: flex; min-height: 0; padding: 1px 2px 2px 0; }
.canvas { flex: 1; position: relative; margin-top: -1px; }
.wires { position: absolute; left: 0; top: 0; width: 1000px; height: 255px; fill: none; stroke: #222; }
.wires .head { fill: #000; }
.node { position: absolute; width: 86px; height: 53px; border: 1.500px solid #85878c; border-radius: 4px; background: #dadbe1; font-family: "Liberation Sans", Arial, sans-serif; color: #111; letter-spacing: 0; }
.label { position: absolute; left: -13px; right: -7px; top: -18px; text-align: center; font-weight: 400; font-size: 12px; line-height: 16px; letter-spacing: -.14px; }
.kind { position: absolute; left: 0; right: 4px; top: 1px; text-align: center; font-weight: 700; font-size: 11px; line-height: 13px; letter-spacing: -.1px; }
.in { position: absolute; left: 27px; top: 12px; width: 23px; height: 30px; }
.out { position: absolute; left: 24px; top: 12px; width: 27px; height: 30px; }
.num { position: absolute; right: 10px; top: 30px; font-weight: 700; font-size: 11px; line-height: 13px; }
.port { position: absolute; width: 6px; height: 6px; top: 22px; background: #77797a; }
.port.r { right: -5px; }
.port.l { left: -5px; }
.emp { left: 81px; top: 45px; }
.dep { left: 93px; top: 146px; }
.of1 { left: 673px; top: 22px; background: #02b9f3; border-color: #157fa8; }
.of1 .port { background: #176f92; }
.of2 { left: 703px; top: 116px; }
.of3 { left: 628px; top: 194px; }
.ed-v { height: 218px; }

.console { height: 305px; }
.console .tabs { height: 26px; }
.wrapico { margin: 0 5px 0 3px; }
.console .active-tool { margin-left: 3px; }
.pinico { margin: 0 6px 0 8px; }
.winico { margin: 0 6px 0 7px; }
.monico { margin-right: 6px; }
.console .min { margin-left: 9px; }
.console .tab { padding-right: 8px; }
.console-name { height: 15px; line-height: 13px; border-bottom: 1px solid #bfbfbf; padding-left: 1px; letter-spacing: -.25px; }
.console-body { flex: 1; display: flex; padding: 1px 2px 0 0; }
.console-text { flex: 1; }
.co-v { height: 194px; margin-top: 20px; }
.console .hbar { margin: 0 18px 0 1px; }

.status { height: 23px; flex: none; padding: 4px 0 0 1px; border-bottom: 1px solid #5b6069; }

.dialog { position: absolute; left: 448px; top: 34px; width: 468px; height: 628px; border: 1px solid #3c5260; background: #66cbea; padding: 0 6px 6px; }
.dlg-title { height: 27px; display: flex; padding-left: 2px; }
.dlg-title .ico { margin-top: 5px; width: 15px; height: 15px; }
.dlg-name { flex: 1; text-align: center; font-size: 13.500px; line-height: 27px; padding-left: 13px; letter-spacing: -.05px; }
.dlg-close { width: 32px; height: 20px; background: #c4584f; border: 1px solid #5b3a40; border-top: 0; margin-right: -1px; display: flex; align-items: center; justify-content: center; }
.dlg-body { height: 593px; background: #f0f0f0; border: 1px solid #69aec8; padding: 5px 4px 0; letter-spacing: -.3px; }
.dlg-tabs { display: flex; height: 19px; border-bottom: 1px solid #bcbcbc; }
.dtab { height: 19px; line-height: 19px; padding: 0 4px; }
.dtab.on { background: #fff; border: 1px solid #a5a5a5; border-bottom: 0; border-radius: 3px 3px 0 0; padding: 0 3px; line-height: 18px; }
.pane { height: 515px; border: 2px solid #fff; padding: 11px 8px 0 9px; }
.group-name { font: 700 10.500px/14px "Liberation Sans", Arial, sans-serif; padding-left: 3px; letter-spacing: .1px; }
.group { height: 413px; margin: 7px 1px 0 0; border: 1px solid #222; padding: 15px 9px 0 10px; }
.btn { display: flex; align-items: center; justify-content: center; height: 22px; background: #dfdfdf; border: 1px solid #8a8a8a; white-space: nowrap; }
.off { background: #f2f2f2; border-color: #bbbfc2; color: #8d8d8d; }
.actions { display: flex; gap: 6.700px; padding-left: 2px; letter-spacing: -.15px; }
.pull { width: 111px; border-color: #3a80b8; margin-right: auto; }
.sq { width: 31px; }
.bi { width: 14px; height: 14px; }
.bi.big { width: 16px; height: 16px; }
.table-frame { height: 236px; width: 401px; margin-top: 20px; border: 1px solid #bcbdc4; padding: 1px; letter-spacing: -.2px; }
.table-box { height: 232px; border: 1px solid #8a909d; background: #fff; overflow: hidden; display: flex; flex-direction: column; }
.grid { height: 213px; overflow: hidden; margin-right: 2px; padding-top: 1px; }
.gr { height: 17.720px; display: grid; grid-template-columns: 94px 94px 94px 94px 22px; line-height: 17px; border-bottom: 1px solid #efefef; }
.gr span { border-right: 1px solid #ececec; text-align: center; overflow: hidden; white-space: nowrap; }
.gr span:first-child { text-align: left; padding-left: 6px; }
.gh { height: 18px; }
.gh .cut { text-align: left; padding-left: 14px; }
.table-box .hbar { margin-right: 2px; }
.dl-h { width: 218px; }
.types { display: flex; align-items: center; height: 16px; margin-top: 18px; }
.lbl { width: 89px; }
.radio { width: 11px; height: 11px; border: 1px solid #777; border-radius: 50%; background: #fff; margin-right: 4px; }
.radio.on { background: radial-gradient(circle, #222 0 2.600px, #fff 3.200px); }
.rl { width: 90px; letter-spacing: -.25px; }
.ext { display: flex; margin-top: 13px; height: 24px; }
.ext-lbl { width: 93px; }
.field { width: 267px; height: 20px; border: 1px solid #b8bcbe; margin: 3px 9px 0 0; }
.dotsbtn { width: 31px; margin-top: 2px; }
.xmls { display: flex; justify-content: flex-end; gap: 7px; margin-top: 15px; padding-right: 1px; letter-spacing: -.1px; }
.xbtn { width: 86px; }
.dlg-foot { display: flex; justify-content: flex-end; gap: 7px; padding: 17px 6px 0 0; letter-spacing: -.15px; }
.ok { width: 85px; }
```
